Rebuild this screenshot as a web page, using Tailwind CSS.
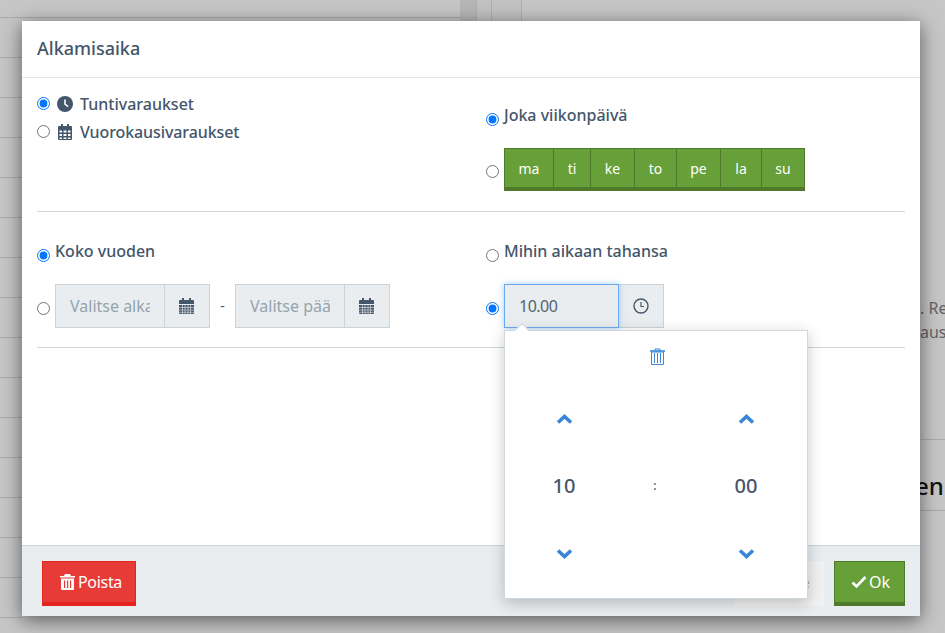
<!DOCTYPE html>
<html lang="fi">
<head>
<meta charset="utf-8">
<script src="https://cdn.jsdelivr.net/npm/@tailwindcss/browser@4"></script>
<title>Alkamisaika</title>
</head>
<body class="m-0">
<div class="relative w-[945px] h-[633px] overflow-hidden bg-[#c6c6c6] font-['Noto_Sans',sans-serif] text-[#44566a]">
  <!-- dimmed page behind the dialog -->
  <div class="absolute left-0 top-[17px] w-[22px] h-[616px] bg-[repeating-linear-gradient(to_bottom,#a9a9a9_0,#a9a9a9_1px,transparent_1px,transparent_40px)]"></div>
  <div class="absolute left-0 top-[17px] w-[460px] h-px bg-[#a9a9a9]"></div>
  <div class="absolute left-[460px] top-0 w-[16px] h-[21px] bg-[#b6b6b6]"></div>
  <div class="absolute left-[476px] top-0 w-[46px] h-[21px] bg-[#c2c2c2] border-l border-r border-[#adadad]"></div>
  <div class="absolute left-[491px] top-0 w-px h-[21px] bg-[#adadad]"></div>
  <div class="absolute left-[920px] top-[296px] text-[16px] leading-[24px] text-[#636363] whitespace-nowrap">. Re<br>ausl</div>
  <div class="absolute left-[921px] top-[439px] w-[24px] h-px bg-[#a9a9a9]"></div>
  <div class="absolute left-[915px] top-[468px] text-[24px] leading-[36px] font-medium text-[#111]">en</div>
  <div class="absolute left-[921px] top-[510px] w-[24px] h-px bg-[#a9a9a9]"></div>

  <!-- dialog -->
  <div class="absolute left-[22px] top-[21px] w-[898px] h-[595px] bg-white shadow-[0_4px_18px_rgba(0,0,0,0.55)] flex flex-col">
    <header class="h-[57px] shrink-0 border-b border-[#e3e6e8] pl-[15px] pb-[2px] flex items-center">
      <h2 class="text-[18px] font-medium leading-[24px] m-0">Alkamisaika</h2>
    </header>

    <main class="flex-1 px-[15px] min-h-0">
      <section class="h-[134px] border-b border-[#d3d6d8] grid grid-cols-[449px_1fr]">
        <div class="pt-[16px] flex flex-col gap-[8px]">
          <label class="flex items-center h-[20px] text-[16px] font-medium">
            <input type="radio" name="a" checked class="m-0 mb-[1px] w-[13px] h-[13px]">
            <svg class="ml-[7px] w-[16px] h-[16px]" viewBox="0 0 16 16"><circle cx="8" cy="8" r="8" fill="#44566a"/><path d="M8 3.500V8.200L11.200 10.600" fill="none" stroke="#fff" stroke-width="1.600"/></svg>
            <span class="ml-[7px]">Tuntivaraukset</span>
          </label>
          <label class="flex items-center h-[20px] text-[16px] font-medium">
            <input type="radio" name="a" class="m-0 mb-[1px] w-[13px] h-[13px]">
            <svg class="ml-[8px] w-[14px] h-[16px]" viewBox="0 0 14 16"><path fill="#44566a" fill-rule="evenodd" d="M3 0h2v2h4V0h2v2h2a1 1 0 0 1 1 1v12a1 1 0 0 1-1 1H1a1 1 0 0 1-1-1V3a1 1 0 0 1 1-1h2zM1.500 6.500v2h2.500v-2zm4 0v2h3v-2zm4.500 0v2h2.500v-2zM1.500 10v2h2.500v-2zm4 0v2h3v-2zm4.500 0v2h2.500v-2zM1.500 13.500V15h2.500v-1.500zm4 0V15h3v-1.500zm4.500 0V15h2.500v-1.500z"/></svg>
            <span class="ml-[8px] tracking-[-0.1px]">Vuorokausivaraukset</span>
          </label>
        </div>
        <div class="pt-[26px]">
          <label class="flex items-start h-[24px] text-[16px] font-medium leading-[22px]">
            <input type="radio" name="b" checked class="m-0 mt-[9px] w-[13px] h-[13px]">
            <span class="ml-[5px]">Joka viikonpäivä</span>
          </label>
          <div class="relative flex items-center mt-[20px]">
            <input type="radio" name="b" class="m-0 mt-[3px] w-[13px] h-[13px] self-center">
            <div class="ml-[5px] flex h-[43px] text-[14px] leading-[22px] text-white border-b-[4px] border-[#4f7a2b] bg-[#679f38]">
              <span class="w-[49px] pt-[2px] flex items-center justify-center border-t border-l border-[#4f7a2b]">ma</span>
              <span class="w-[37px] pt-[2px] flex items-center justify-center border-t border-l border-[#4f7a2b]">ti</span>
              <span class="w-[44px] pt-[2px] flex items-center justify-center border-t border-l border-[#4f7a2b]">ke</span>
              <span class="w-[42px] pt-[2px] flex items-center justify-center border-t border-l border-[#4f7a2b]">to</span>
              <span class="w-[44px] pt-[2px] flex items-center justify-center border-t border-l border-[#4f7a2b]">pe</span>
              <span class="w-[41px] pt-[2px] flex items-center justify-center border-t border-l border-[#4f7a2b]">la</span>
              <span class="w-[44px] pt-[2px] flex items-center justify-center border-t border-x border-[#4f7a2b]">su</span>
            </div>
          </div>
        </div>
      </section>

      <section class="h-[136px] border-b border-[#d3d6d8] grid grid-cols-[449px_1fr]">
        <div class="pt-[28px]">
          <label class="flex items-start h-[23px] text-[16px] font-medium leading-[22px]">
            <input type="radio" name="c" checked class="m-0 mt-[9px] w-[13px] h-[13px]">
            <span class="ml-[5px]">Koko vuoden</span>
          </label>
          <div class="flex items-center mt-[21px]">
            <input type="radio" name="c" class="m-0 mt-[5px] w-[13px] h-[13px]">
            <div class="ml-[5px] flex h-[44px] w-[155px] border border-[#cdd4d8] bg-[#e9edf0]">
              <span class="w-[109px] pl-[14px] pr-[14px] flex items-center overflow-hidden whitespace-nowrap text-[16px] text-[#94a3ac] border-r border-[#cdd4d8]"><span class="block w-full overflow-hidden">Valitse alkamispäivä</span></span>
              <span class="flex-1 flex items-center justify-center pr-[2px] pb-[1px]">
                <svg class="w-[15px] h-[16px]" viewBox="0 0 15 16"><path fill="#44566a" d="M3 0h2v2h5V0h2v2h2a1 1 0 0 1 1 1v3H0V3a1 1 0 0 1 1-1h2zM0 7h15v8a1 1 0 0 1-1 1H1a1 1 0 0 1-1-1z"/><path stroke="#e9edf0" stroke-width=".6" d="M0 9.500h15M0 12h15M0 14.300h15M3.500 7v9M6 7v9M9 7v9M11.500 7v9"/></svg>
              </span>
            </div>
            <span class="w-[25px] text-center text-[14px] text-[#44566a] relative -top-[1px]">-</span>
            <div class="flex h-[44px] w-[155px] border border-[#cdd4d8] bg-[#e9edf0]">
              <span class="w-[109px] pl-[14px] pr-[14px] flex items-center overflow-hidden whitespace-nowrap text-[16px] text-[#94a3ac] border-r border-[#cdd4d8]"><span class="block w-full overflow-hidden">Valitse päättymispäivä</span></span>
              <span class="flex-1 flex items-center justify-center pr-[2px] pb-[1px]">
                <svg class="w-[15px] h-[16px]" viewBox="0 0 15 16"><path fill="#44566a" d="M3 0h2v2h5V0h2v2h2a1 1 0 0 1 1 1v3H0V3a1 1 0 0 1 1-1h2zM0 7h15v8a1 1 0 0 1-1 1H1a1 1 0 0 1-1-1z"/><path stroke="#e9edf0" stroke-width=".6" d="M0 9.500h15M0 12h15M0 14.300h15M3.500 7v9M6 7v9M9 7v9M11.500 7v9"/></svg>
              </span>
            </div>
          </div>
        </div>
        <div class="pt-[28px]">
          <label class="flex items-start h-[23px] text-[16px] font-medium leading-[22px]">
            <input type="radio" name="d" class="m-0 mt-[9px] w-[13px] h-[13px]">
            <span class="ml-[5px]">Mihin aikaan tahansa</span>
          </label>
          <div class="flex items-center mt-[21px]">
            <input type="radio" name="d" checked class="m-0 mt-[5px] w-[13px] h-[13px]">
            <div class="ml-[5px] flex h-[44px] w-[160px]">
              <span class="w-[115px] pl-[14px] flex items-center text-[16px] tracking-[-0.5px] text-[#54646f] bg-[#e9edf0] border border-[#6aaaee] shadow-[0_0_6px_rgba(100,170,240,0.6)] relative z-10">10.00</span>
              <span class="flex-1 flex items-center justify-center bg-[#e9edf0] border border-l-0 border-[#cdd4d8]">
                <svg class="w-[16px] h-[16px]" viewBox="0 0 16 16" fill="none" stroke="#44566a"><circle cx="8" cy="8" r="7" stroke-width="1.400"/><path d="M8 4v4.500h3" stroke-width="1.200"/></svg>
              </span>
            </div>
          </div>
        </div>
      </section>
    </main>

    <footer class="h-[71px] shrink-0 bg-[#e9edf0] border-t border-[#cdd4d8] pl-[20px] pr-[15px] pt-[15px] flex items-start justify-between">
      <button class="w-[94px] h-[45px] bg-[#e73b37] border border-[#e5231f] border-b-[4px] text-white text-[16px] tracking-[-0.3px] flex items-center justify-center gap-[3px] pl-[4px]">
        <svg class="w-[15px] h-[16px]" viewBox="0 0 15 16"><path fill="#fff" fill-rule="evenodd" d="M5 0h5l1 2h4v1.500H0V2h4zM1 4.500h13V15a1 1 0 0 1-1 1H2a1 1 0 0 1-1-1zM4 6.500V14h1.200V6.500zm3 0V14h1.200V6.500zm3 0V14h1.200V6.500z"/></svg>
        <span>Poista</span>
      </button>
      <div class="flex items-start">
        <span class="w-[89px] h-[45px] bg-[#f1f1f1] text-right text-[#aab2b8] text-[14px] leading-[44px] pr-[14px]">e</span>
        <button class="ml-[10px] w-[71px] h-[45px] bg-[#679f38] border border-[#4f7a2b] border-b-[4px] text-white text-[16px] flex items-center justify-center gap-[2px] pl-[2px]">
          <svg class="w-[16px] h-[14px]" viewBox="0 0 16 14"><path fill="none" stroke="#fff" stroke-width="2.600" d="M1.500 7.500l4 4L14.500 2"/></svg>
          <span>Ok</span>
        </button>
      </div>
    </footer>

    <!-- time picker popover -->
    <div class="absolute left-[482px] top-[309px] w-[304px] h-[269px] bg-white border border-[#cdd8de] shadow-[0_4px_14px_rgba(0,0,0,0.22)] z-20">
      <span class="absolute left-[12px] -top-[6px] w-[10px] h-[10px] rotate-45 bg-white border-l border-t border-[#cdd8de]"></span>
      <div class="h-[50px] flex items-center justify-center pl-[3px]">
        <svg class="w-[15px] h-[17px]" viewBox="0 0 15 17" fill="none" stroke="#3a87d9"><path d="M0 3h15" stroke-width="1.600"/><path d="M5 2.500V1h5v1.500" stroke-width="1"/><path d="M1.500 4h12v12.500h-12z" stroke-width="1"/><path d="M4.500 5v10M7.500 5v10M10.500 5v10" stroke-width="1"/></svg>
      </div>
      <div class="grid grid-cols-[118px_64px_118px] text-center">
        <div class="flex flex-col items-center">
          <svg class="mt-[33px] w-[17px] h-[10px]" viewBox="0 0 16 10"><path fill="none" stroke="#3a87d9" stroke-width="3.600" d="M1.500 8.500L8 2.500l6.500 6"/></svg>
          <span class="mt-[48px] text-[20px] leading-[28px] font-medium">10</span>
          <svg class="mt-[49px] w-[17px] h-[10px]" viewBox="0 0 16 10"><path fill="none" stroke="#3a87d9" stroke-width="3.600" d="M1.500 1.500L8 7.500l6.500-6"/></svg>
        </div>
        <div class="flex justify-center pt-[91px]"><span class="text-[12px] leading-[28px] text-[#44566a] font-medium">:</span></div>
        <div class="flex flex-col items-center">
          <svg class="mt-[33px] w-[17px] h-[10px]" viewBox="0 0 16 10"><path fill="none" stroke="#3a87d9" stroke-width="3.600" d="M1.500 8.500L8 2.500l6.500 6"/></svg>
          <span class="mt-[48px] text-[20px] leading-[28px] font-medium">00</span>
          <svg class="mt-[49px] w-[17px] h-[10px]" viewBox="0 0 16 10"><path fill="none" stroke="#3a87d9" stroke-width="3.600" d="M1.500 1.500L8 7.500l6.500-6"/></svg>
        </div>
      </div>
    </div>
  </div>
</div>
</body>
</html>
